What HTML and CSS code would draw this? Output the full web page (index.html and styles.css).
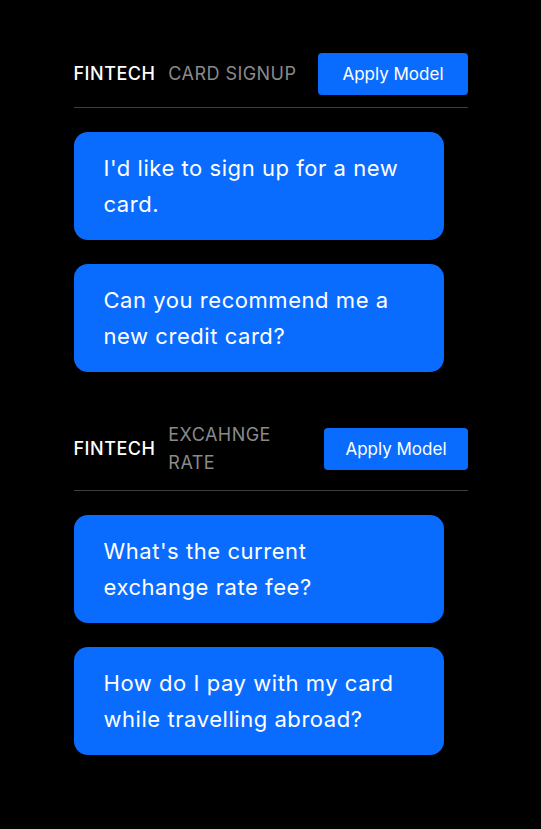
FILE: index.html
```html
<!DOCTYPE html>
<html lang="en">
<head>
<meta charset="utf-8">
<title>Models</title>
<link rel="stylesheet" href="styles.css">
</head>
<body>
<main class="page">
  <section class="group">
    <header class="group-head">
      <div class="titles">
        <span class="brand">FINTECH</span>
        <span class="topic">CARD SIGNUP</span>
      </div>
      <button class="apply">Apply Model</button>
    </header>
    <div class="bubbles">
      <div class="bubble">I'd like to sign up for a new card.</div>
      <div class="bubble">Can you recommend me a new credit card?</div>
    </div>
  </section>
  <section class="group">
    <header class="group-head">
      <div class="titles">
        <span class="brand">FINTECH</span>
        <span class="topic topic-narrow">EXCAHNGE RATE</span>
      </div>
      <button class="apply apply-tight">Apply Model</button>
    </header>
    <div class="bubbles">
      <div class="bubble">What's the current exchange rate fee?</div>
      <div class="bubble">How do I pay with my card while travelling abroad?</div>
    </div>
  </section>
</main>
</body>
</html>
```
FILE: styles.css
```css
html, body {
  margin: 0;
  padding: 0;
  background: #000;
}
body {
  font-family: Inter, "Noto Sans", sans-serif;
  color: #fff;
}
.page {
  width: 394px;
  margin: 0 auto;
  padding-top: 53px;
  display: flex;
  flex-direction: column;
  gap: 49px;
}
.group {
  display: flex;
  flex-direction: column;
}
.group-head {
  display: flex;
  align-items: center;
  justify-content: space-between;
  padding-bottom: 12px;
  border-bottom: 1px solid #3d3d3d;
  margin-bottom: 24px;
}
.group + .group .group-head {
  padding-bottom: 13px;
}
.titles {
  display: flex;
  align-items: center;
  gap: 13px;
}
.brand {
  font-size: 18px;
  font-weight: 500;
  line-height: 28px;
  letter-spacing: 0.5px;
}
.topic {
  font-size: 18px;
  line-height: 28px;
  letter-spacing: 0.45px;
  color: #8a8a8a;
}
.topic-narrow {
  width: 110px;
}
.apply {
  height: 42px;
  padding: 0 24px;
  border: 0;
  border-radius: 4px;
  background: #0a6cff;
  color: #fff;
  font-family: inherit;
  font-size: 17px;
}
.apply-tight {
  padding: 0 21px;
}
.bubbles {
  display: flex;
  flex-direction: column;
  gap: 24px;
}
.bubble {
  width: 370px;
  box-sizing: border-box;
  padding: 18px 30px;
  border-radius: 14px;
  background: #0a6cff;
  font-size: 22px;
  line-height: 36px;
  letter-spacing: 0.55px;
}
```
